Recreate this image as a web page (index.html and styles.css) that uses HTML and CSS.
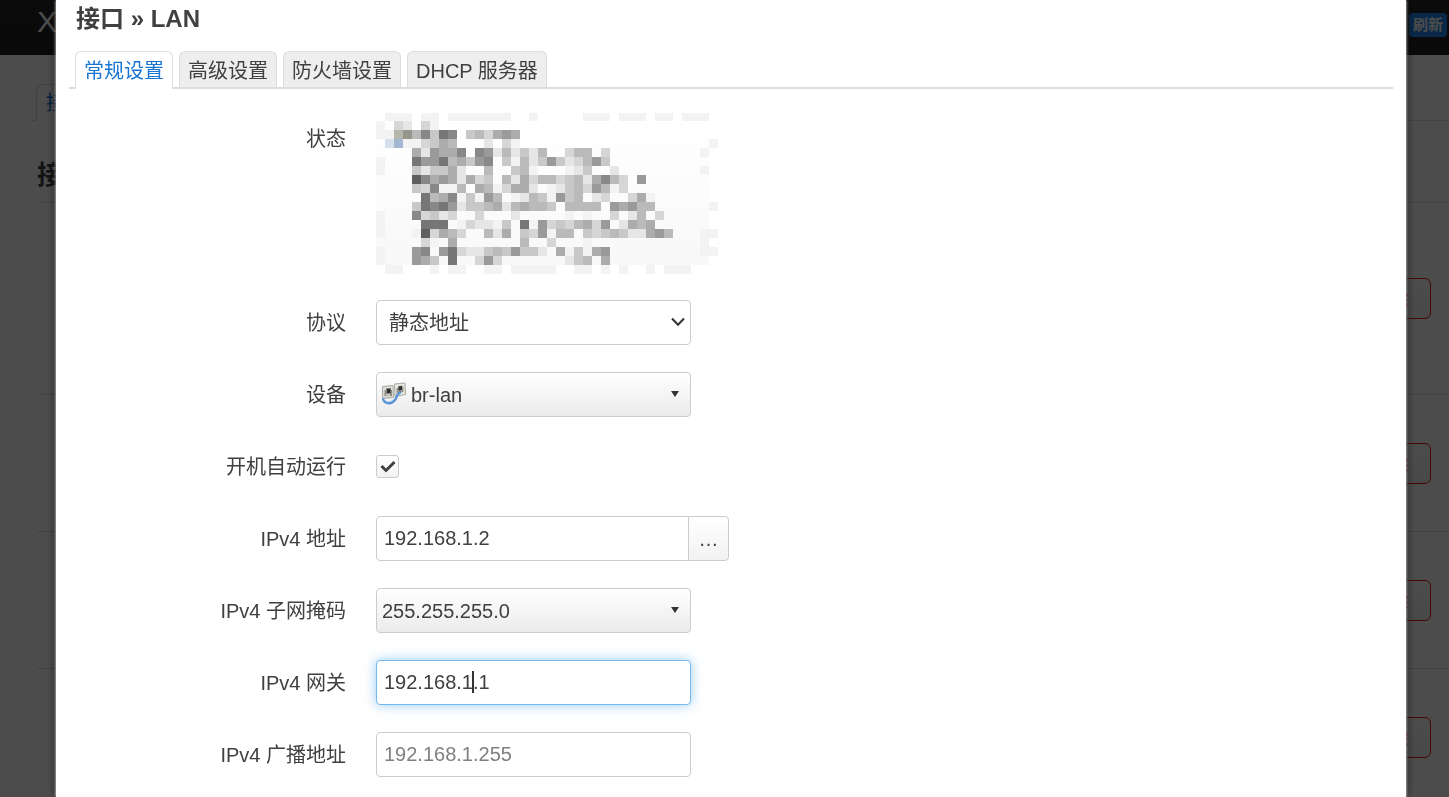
FILE: index.html
```html
<!DOCTYPE html>
<html lang="zh-CN">
<head>
    <meta charset="UTF-8">
    <meta name="viewport" content="width=device-width, initial-scale=1.0">
    <title>接口 - LAN</title>
    <link rel="stylesheet" href="styles.css">
</head>
<body>

    <!-- Page behind the dialog -->
    <div class="page" inert>
        <header class="topbar">
            <a class="brand" href="#">X</a>
            <button class="refresh" type="button">刷新</button>
        </header>
        <nav class="page-tabs">
            <a href="#">接口</a>
        </nav>
        <main class="page-main">
            <h2>接口</h2>
            <div class="iface-row iface-first"><button type="button">删除</button></div>
            <div class="iface-row"><button type="button">删除</button></div>
            <div class="iface-row"><button type="button">删除</button></div>
            <div class="iface-row"><button type="button">删除</button></div>
        </main>
    </div>

    <!-- Dialog -->
    <div class="overlay">
        <div class="modal" role="dialog" aria-labelledby="modal-title">
            <h4 id="modal-title">接口 » LAN</h4>

            <ul class="tabs">
                <li class="active"><a href="#">常规设置</a></li>
                <li><a href="#">高级设置</a></li>
                <li><a href="#">防火墙设置</a></li>
                <li><a href="#">DHCP 服务器</a></li>
            </ul>

            <form>
                <div class="row row-status">
                    <span class="label">状态</span>
                    <svg id="status" class="status" viewBox="0 1 342 161" width="342" height="161" shape-rendering="crispEdges" aria-hidden="true">
                        <defs>
                            <linearGradient id="fade" x1="0" y1="0" x2="0" y2="1">
                                <stop offset="0" stop-color="#fff"/>
                                <stop offset="1" stop-color="#f8f8f8"/>
                            </linearGradient>
                        </defs>
                        <rect x="0" y="9" width="333" height="144" fill="url(#fade)"/>
                    </svg>
                </div>

                <div class="row">
                    <label for="proto">协议</label>
                    <div class="field">
                        <select id="proto" class="control proto">
                            <option>静态地址</option>
                        </select>
                        <svg class="chevron" viewBox="0 0 14 10" width="14" height="10" aria-hidden="true">
                            <path d="M1 1.5 L7 7.8 L13 1.5" fill="none" stroke="#333" stroke-width="2"/>
                        </svg>
                    </div>
                </div>

                <div class="row">
                    <label for="device">设备</label>
                    <div class="field">
                        <select id="device" class="control dropdown with-icon">
                            <option>br-lan</option>
                        </select>
                        <svg class="bridge-icon" viewBox="0 0 24 24" width="24" height="24" aria-hidden="true">
                            <path d="M0.500 4.500 L11 3.500 L11.500 15.500 L0.500 16.500 Z" fill="#deded8" stroke="#a9a9a4"/>
                            <path d="M2.500 8 L4 8 L4 6 L9 6 L9 8 L10 8 L10 14 L2.500 14 Z" fill="#8b8b84"/>
                            <path d="M5 7 H8.500 V11 H5 Z" fill="#2c2c28"/>
                            <path d="M12.500 2 L23 1 L23.500 12.500 L13 14.500 Z" fill="#e8e8e2" stroke="#a9a9a4"/>
                            <path d="M14.500 6 L16 6 L16 4 L20.500 3.500 L20.500 5 L21.500 5 L21.500 10 L14.500 11 Z" fill="#97968a"/>
                            <path d="M16.500 4.500 L20 4 L20 8 L16.500 8.500 Z" fill="#33332c"/>
                            <path d="M1 16 C2 22 9 23 13 18 C15 15 15 11 19 10" fill="none" stroke="#5a93d6" stroke-width="2.500"/>
                            <path d="M2 17 C5 21 9 20 12 17" fill="none" stroke="#b5d3f3"/>
                            <path d="M4 12 H8 V15 H4 Z" fill="#c9c9c4"/>
                        </svg>
                        <span class="arrow" aria-hidden="true"></span>
                    </div>
                </div>

                <div class="row">
                    <label for="auto">开机自动运行</label>
                    <div class="field field-check">
                        <input id="auto" class="check" type="checkbox" checked>
                        <svg class="tick" viewBox="0 0 16 13" width="16" height="13" aria-hidden="true">
                            <path d="M1.500 6 L6 10.500 L14.500 2" fill="none" stroke="#404040" stroke-width="3"/>
                        </svg>
                    </div>
                </div>

                <div class="row">
                    <label for="ipaddr">IPv4 地址</label>
                    <div class="field-group">
                        <input id="ipaddr" class="control" type="text" value="192.168.1.2">
                        <button class="more" type="button">…</button>
                    </div>
                </div>

                <div class="row">
                    <label for="netmask">IPv4 子网掩码</label>
                    <div class="field">
                        <select id="netmask" class="control dropdown">
                            <option>255.255.255.0</option>
                        </select>
                        <span class="arrow" aria-hidden="true"></span>
                    </div>
                </div>

                <div class="row">
                    <label for="gateway">IPv4 网关</label>
                    <div class="field">
                        <input id="gateway" class="control gateway" type="text" value="192.168.1.1" autofocus>
                        <span class="caret" aria-hidden="true"></span>
                    </div>
                </div>

                <div class="row">
                    <label for="broadcast">IPv4 广播地址</label>
                    <div class="field">
                        <input id="broadcast" class="control" type="text" placeholder="192.168.1.255">
                    </div>
                </div>
            </form>
        </div>
    </div>

    <script src="script.js"></script>
</body>
</html>
```
FILE: styles.css
```css
* {
    box-sizing: border-box;
}

body {
    margin: 0;
    height: 100vh;
    overflow: hidden;
    background: #fff;
    color: #404040;
    font-family: "Liberation Sans", Arial, "Noto Sans CJK SC", sans-serif;
    font-size: 20px;
    line-height: 28px;
}

a {
    text-decoration: none;
}

/* Page behind the dialog */
.topbar {
    display: flex;
    justify-content: space-between;
    align-items: center;
    height: 55px;
    padding: 0 2px 6px 37px;
    background: linear-gradient(#282828, #202020);
}

.brand {
    color: #fff;
    font-size: 30px;
    line-height: 40px;
    padding-bottom: 6px;
}

.refresh {
    height: 24px;
    padding: 0 4px;
    border: 0;
    border-radius: 4px;
    background: #1e87f0;
    color: #fff;
    font: bold 15px/24px "Liberation Sans", "Noto Sans CJK SC", sans-serif;
}

.page-tabs {
    display: flex;
    height: 66px;
    margin-left: 30px;
    padding-top: 29px;
    border-bottom: 1px solid #ddd;
}

.page-tabs a {
    height: 37px;
    margin-left: 6px;
    padding: 4px 9px;
    border: 1px solid #ddd;
    border-bottom-color: #fff;
    border-radius: 6px 6px 0 0;
    color: #0069d6;
}

.page-main {
    padding: 34px 2px 0 37px;
}

.page-main h2 {
    margin: 0;
    height: 48px;
    border-bottom: 1px solid #ddd;
    font-size: 26px;
    line-height: 40px;
}

.iface-row {
    display: flex;
    justify-content: flex-end;
    align-items: center;
    height: 137px;
    padding-right: 16px;
    border-bottom: 1px solid #ddd;
}

.iface-first {
    height: 192px;
}

.iface-row button {
    height: 41px;
    padding: 0 21px;
    border: 1px solid #f21a0d;
    border-radius: 6px;
    background: linear-gradient(#fff, #f2f2f2);
    color: #f21a0d;
    font: 20px "Liberation Sans", "Noto Sans CJK SC", sans-serif;
}

/* Dialog */
.overlay {
    position: fixed;
    inset: 0;
    padding: 0 43px 0 56px;
    background: rgba(0, 0, 0, 0.7);
}

.modal {
    min-height: 100%;
    padding: 0 13px;
    background: #fff;
    box-shadow: 0 0 3px #fff, 0 0 8px #000;
}

.modal h4 {
    margin: 0 0 13px;
    padding-left: 7px;
    font-size: 24px;
    line-height: 38px;
}

.tabs {
    display: flex;
    gap: 6px;
    margin: 0 0 24px;
    padding: 0 6px;
    border-bottom: 2px solid #ddd;
    list-style: none;
}

.tabs li {
    height: 36px;
    border: 1px solid #ddd;
    border-bottom: 0;
    border-radius: 6px 6px 0 0;
    background: #eee;
}

.tabs a {
    display: block;
    padding: 0 8px;
    color: #404040;
    line-height: 38px;
}

.tabs .active {
    height: 38px;
    margin-bottom: -2px;
    background: #fff;
}

.tabs .active a {
    color: #1976d2;
}

.row {
    display: grid;
    grid-template-columns: 277px 1fr;
    column-gap: 30px;
    margin-bottom: 27px;
}

.row label,
.row .label {
    height: 45px;
    text-align: right;
    line-height: 46px;
}

.row-status {
    margin-bottom: 26px;
}

.row-status .label {
    line-height: 52px;
}

.status {
    display: block;
}

.field {
    position: relative;
    width: 315px;
    height: 45px;
}

.field-group {
    display: flex;
    width: 353px;
}

.control {
    width: 100%;
    height: 45px;
    margin: 0;
    padding: 0 7px;
    border: 1px solid #ccc;
    border-radius: 4px;
    outline: none;
    background: #fff;
    color: #404040;
    font: inherit;
    appearance: none;
}

.control::placeholder {
    color: #808080;
}

.control:focus {
    border-color: #74b9f0;
    box-shadow: 0 0 12px rgba(82, 168, 236, 0.6);
}

.proto {
    padding-left: 12px;
}

.dropdown {
    padding-left: 5px;
    background: linear-gradient(#fff, #ebebeb);
}

.with-icon {
    padding-left: 34px;
}

.gateway {
    caret-color: transparent;
}

.chevron,
.bridge-icon,
.arrow,
.caret,
.tick {
    position: absolute;
    pointer-events: none;
}

.chevron {
    top: 17px;
    right: 6px;
}

.bridge-icon {
    top: 10px;
    left: 6px;
}

.arrow {
    top: 19px;
    right: 12px;
    border: 4px solid transparent;
    border-top: 6px solid #333;
    border-bottom: 0;
}

.caret {
    top: 11px;
    left: 96px;
    width: 2px;
    height: 22px;
    background: #333;
    visibility: hidden;
}

.gateway:focus + .caret {
    visibility: visible;
}

.field-check {
    display: flex;
    align-items: center;
}

.check {
    width: 23px;
    height: 23px;
    margin: 0;
    border: 1px solid #ccc;
    border-radius: 3px;
    background: linear-gradient(#fff, #f2f2f2);
    appearance: none;
}

.tick {
    left: 4px;
    visibility: hidden;
}

.check:checked + .tick {
    visibility: visible;
}

.field-group .control {
    flex: 1;
    min-width: 0;
    border-radius: 4px 0 0 4px;
}

.more {
    width: 41px;
    margin-left: -1px;
    padding: 0;
    border: 1px solid #ccc;
    border-radius: 0 4px 4px 0;
    background: linear-gradient(#fff, #f2f2f2);
    color: #404040;
    font: inherit;
}
```
FILE: script.js
```js
// Status panel cells, one character per 9px cell
const CELL = 9;
const shades = {
    1: '#f3f3f3', 2: '#e6e6e6', 3: '#d6d6d6', 4: '#c8c8c8', 5: '#bababa',
    6: '#acacac', 7: '#9a9a9a', 8: '#888', 9: '#767676', a: '#5e5e5e',
    g: '#b5b5ab', h: '#95958c', b: '#d5e0ec', c: '#a3b7d3'
};
const cells = [
    '.111.11.1111111..1.....111.111.11.111.',
    '1.32.31',
    '11gh58498.453676',
    '.bc113465...2.31.....................1',
    '....627668.87252425..355.3..........1.',
    '1...977956478.415247423574',
    '1...424462..5..451...124..2.........1.',
    '....a86762634.52635534526853.7',
    '....438115.6513662.124537513',
    '.....956814175.12541745.23..361',
    '....4989724456256554.5555.76755......1',
    '1...83423..3...2.....1.1..3.25.3',
    '1....999.132214.9173435637.2656',
    '1...1a3653..526.437155.434542267' + '5...11',
    '.....31.6.......5..3...1............1.',
    '1...78.793224547442.614167..........11',
    '1...764.9..373.......245.6',
    '.11...1.11..11.11111..11.1.1..1.111.'
];

const status = document.getElementById('status');
cells.forEach((line, y) => {
    [...line].forEach((key, x) => {
        if (!shades[key]) return;
        const rect = document.createElementNS('http://www.w3.org/2000/svg', 'rect');
        rect.setAttribute('x', x * CELL);
        rect.setAttribute('y', y * CELL);
        rect.setAttribute('width', CELL);
        rect.setAttribute('height', CELL);
        rect.setAttribute('fill', shades[key]);
        status.appendChild(rect);
    });
});

// Start editing the gateway address
const gateway = document.getElementById('gateway');
gateway.focus();
gateway.setSelectionRange(9, 9);
```
